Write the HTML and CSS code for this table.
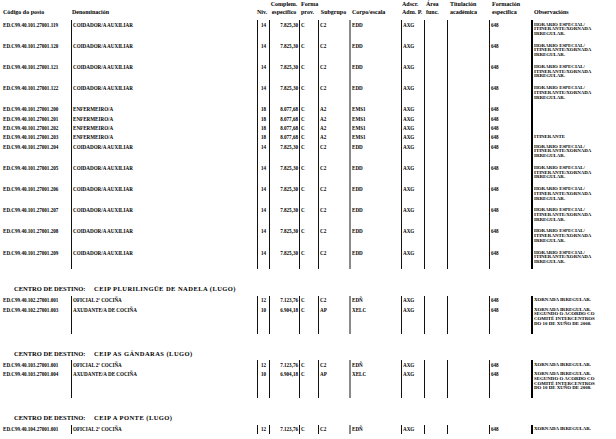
FILE: index.html
```html
<!DOCTYPE html>
<html lang="gl">
<head>
<meta charset="utf-8">
<title>Relación de postos</title>
<link rel="stylesheet" href="styles.css">
</head>
<body>
<div class="page">
  <div class="hrow">
    <div class="h h1"><div class="l1"></div><div class="l2">Código do posto</div></div>
    <div class="h h2"><div class="l1"></div><div class="l2">Denominación</div></div>
    <div class="h h3"><div class="l1"></div><div class="l2">Niv.</div></div>
    <div class="h h4"><div class="l1">Complem.</div><div class="l2">específico</div></div>
    <div class="h h5"><div class="l1">Forma</div><div class="l2">prov.</div></div>
    <div class="h h6"><div class="l1"></div><div class="l2">Subgrupo</div></div>
    <div class="h h7"><div class="l1"></div><div class="l2">Corpo/escala</div></div>
    <div class="h h8"><div class="l1">Adscr.</div><div class="l2">Adm. P.</div></div>
    <div class="h h9"><div class="l1">Área</div><div class="l2">func.</div></div>
    <div class="h h10"><div class="l1">Titulación</div><div class="l2">académica</div></div>
    <div class="h h11"><div class="l1">Formación</div><div class="l2">específica</div></div>
    <div class="h h12"><div class="l1"></div><div class="l2">Observacións</div></div>
  </div>

  <div class="tbl">
    <div class="row t"><div class="c c1">ED.C99.40.101.27001.119</div><div class="c c2">COIDADOR/A AUXILIAR</div><div class="c c3">14</div><div class="c c4">7.825,30</div><div class="c c5">C</div><div class="c c6">C2</div><div class="c c7">EDD</div><div class="c c8">AXG</div><div class="c c9"></div><div class="c c10"></div><div class="c c11">648</div><div class="c c12">HORARIO ESPECIAL/<br>ITINERANTE/XORNADA<br>IRREGULAR.</div></div>
    <div class="row t"><div class="c c1">ED.C99.40.101.27001.120</div><div class="c c2">COIDADOR/A AUXILIAR</div><div class="c c3">14</div><div class="c c4">7.825,30</div><div class="c c5">C</div><div class="c c6">C2</div><div class="c c7">EDD</div><div class="c c8">AXG</div><div class="c c9"></div><div class="c c10"></div><div class="c c11">648</div><div class="c c12">HORARIO ESPECIAL/<br>ITINERANTE/XORNADA<br>IRREGULAR.</div></div>
    <div class="row t"><div class="c c1">ED.C99.40.101.27001.121</div><div class="c c2">COIDADOR/A AUXILIAR</div><div class="c c3">14</div><div class="c c4">7.825,30</div><div class="c c5">C</div><div class="c c6">C2</div><div class="c c7">EDD</div><div class="c c8">AXG</div><div class="c c9"></div><div class="c c10"></div><div class="c c11">648</div><div class="c c12">HORARIO ESPECIAL/<br>ITINERANTE/XORNADA<br>IRREGULAR.</div></div>
    <div class="row t"><div class="c c1">ED.C99.40.101.27001.122</div><div class="c c2">COIDADOR/A AUXILIAR</div><div class="c c3">14</div><div class="c c4">7.825,30</div><div class="c c5">C</div><div class="c c6">C2</div><div class="c c7">EDD</div><div class="c c8">AXG</div><div class="c c9"></div><div class="c c10"></div><div class="c c11">648</div><div class="c c12">HORARIO ESPECIAL/<br>ITINERANTE/XORNADA<br>IRREGULAR.</div></div>
    <div class="row s"><div class="c c1">ED.C99.40.101.27001.200</div><div class="c c2">ENFERMEIRO/A</div><div class="c c3">18</div><div class="c c4">8.077,68</div><div class="c c5">C</div><div class="c c6">A2</div><div class="c c7">EMS1</div><div class="c c8">AXG</div><div class="c c9"></div><div class="c c10"></div><div class="c c11">648</div><div class="c c12"></div></div>
    <div class="row s"><div class="c c1">ED.C99.40.101.27001.201</div><div class="c c2">ENFERMEIRO/A</div><div class="c c3">18</div><div class="c c4">8.077,68</div><div class="c c5">C</div><div class="c c6">A2</div><div class="c c7">EMS1</div><div class="c c8">AXG</div><div class="c c9"></div><div class="c c10"></div><div class="c c11">648</div><div class="c c12"></div></div>
    <div class="row s"><div class="c c1">ED.C99.40.101.27001.202</div><div class="c c2">ENFERMEIRO/A</div><div class="c c3">18</div><div class="c c4">8.077,68</div><div class="c c5">C</div><div class="c c6">A2</div><div class="c c7">EMS1</div><div class="c c8">AXG</div><div class="c c9"></div><div class="c c10"></div><div class="c c11">648</div><div class="c c12"></div></div>
    <div class="row s"><div class="c c1">ED.C99.40.101.27001.203</div><div class="c c2">ENFERMEIRO/A</div><div class="c c3">18</div><div class="c c4">8.077,68</div><div class="c c5">C</div><div class="c c6">A2</div><div class="c c7">EMS1</div><div class="c c8">AXG</div><div class="c c9"></div><div class="c c10"></div><div class="c c11">648</div><div class="c c12">ITINERANTE</div></div>
    <div class="row t"><div class="c c1">ED.C99.40.101.27001.204</div><div class="c c2">COIDADOR/A AUXILIAR</div><div class="c c3">14</div><div class="c c4">7.825,30</div><div class="c c5">C</div><div class="c c6">C2</div><div class="c c7">EDD</div><div class="c c8">AXG</div><div class="c c9"></div><div class="c c10"></div><div class="c c11">648</div><div class="c c12">HORARIO ESPECIAL/<br>ITINERANTE/XORNADA<br>IRREGULAR.</div></div>
    <div class="row t"><div class="c c1">ED.C99.40.101.27001.205</div><div class="c c2">COIDADOR/A AUXILIAR</div><div class="c c3">14</div><div class="c c4">7.825,30</div><div class="c c5">C</div><div class="c c6">C2</div><div class="c c7">EDD</div><div class="c c8">AXG</div><div class="c c9"></div><div class="c c10"></div><div class="c c11">648</div><div class="c c12">HORARIO ESPECIAL/<br>ITINERANTE/XORNADA<br>IRREGULAR.</div></div>
    <div class="row t"><div class="c c1">ED.C99.40.101.27001.206</div><div class="c c2">COIDADOR/A AUXILIAR</div><div class="c c3">14</div><div class="c c4">7.825,30</div><div class="c c5">C</div><div class="c c6">C2</div><div class="c c7">EDD</div><div class="c c8">AXG</div><div class="c c9"></div><div class="c c10"></div><div class="c c11">648</div><div class="c c12">HORARIO ESPECIAL/<br>ITINERANTE/XORNADA<br>IRREGULAR.</div></div>
    <div class="row t"><div class="c c1">ED.C99.40.101.27001.207</div><div class="c c2">COIDADOR/A AUXILIAR</div><div class="c c3">14</div><div class="c c4">7.825,30</div><div class="c c5">C</div><div class="c c6">C2</div><div class="c c7">EDD</div><div class="c c8">AXG</div><div class="c c9"></div><div class="c c10"></div><div class="c c11">648</div><div class="c c12">HORARIO ESPECIAL/<br>ITINERANTE/XORNADA<br>IRREGULAR.</div></div>
    <div class="row t"><div class="c c1">ED.C99.40.101.27001.208</div><div class="c c2">COIDADOR/A AUXILIAR</div><div class="c c3">14</div><div class="c c4">7.825,30</div><div class="c c5">C</div><div class="c c6">C2</div><div class="c c7">EDD</div><div class="c c8">AXG</div><div class="c c9"></div><div class="c c10"></div><div class="c c11">648</div><div class="c c12">HORARIO ESPECIAL/<br>ITINERANTE/XORNADA<br>IRREGULAR.</div></div>
    <div class="row t"><div class="c c1">ED.C99.40.101.27001.209</div><div class="c c2">COIDADOR/A AUXILIAR</div><div class="c c3">14</div><div class="c c4">7.825,30</div><div class="c c5">C</div><div class="c c6">C2</div><div class="c c7">EDD</div><div class="c c8">AXG</div><div class="c c9"></div><div class="c c10"></div><div class="c c11">648</div><div class="c c12">HORARIO ESPECIAL/<br>ITINERANTE/XORNADA<br>IRREGULAR.</div></div>
  </div>

  <div class="sect"><span class="sl">CENTRO DE DESTINO:</span><span class="sn">CEIP PLURILINGÜE DE NADELA (LUGO)</span></div>
  <div class="tbl">
    <div class="row s"><div class="c c1">ED.C99.40.102.27001.001</div><div class="c c2">OFICIAL 2ª COCIÑA</div><div class="c c3">12</div><div class="c c4">7.123,76</div><div class="c c5">C</div><div class="c c6">C2</div><div class="c c7">EDÑ</div><div class="c c8">AXG</div><div class="c c9"></div><div class="c c10"></div><div class="c c11">648</div><div class="c c12">XORNADA IRREGULAR.</div></div>
    <div class="row q"><div class="c c1">ED.C99.40.102.27001.003</div><div class="c c2">AXUDANTE/A DE COCIÑA</div><div class="c c3">10</div><div class="c c4">6.904,18</div><div class="c c5">C</div><div class="c c6">AP</div><div class="c c7">XELC</div><div class="c c8">AXG</div><div class="c c9"></div><div class="c c10"></div><div class="c c11">648</div><div class="c c12">XORNADA IRREGULAR.<br>SEGUNDO O ACORDO CO<br>COMITÉ INTERCENTROS<br>DO 10 DE XUÑO DE 2008.</div></div>
  </div>

  <div class="sect"><span class="sl">CENTRO DE DESTINO:</span><span class="sn">CEIP AS GÁNDARAS (LUGO)</span></div>
  <div class="tbl">
    <div class="row s"><div class="c c1">ED.C99.40.103.27001.001</div><div class="c c2">OFICIAL 2ª COCIÑA</div><div class="c c3">12</div><div class="c c4">7.123,76</div><div class="c c5">C</div><div class="c c6">C2</div><div class="c c7">EDÑ</div><div class="c c8">AXG</div><div class="c c9"></div><div class="c c10"></div><div class="c c11">648</div><div class="c c12">XORNADA IRREGULAR.</div></div>
    <div class="row q"><div class="c c1">ED.C99.40.103.27001.004</div><div class="c c2">AXUDANTE/A DE COCIÑA</div><div class="c c3">10</div><div class="c c4">6.904,18</div><div class="c c5">C</div><div class="c c6">AP</div><div class="c c7">XELC</div><div class="c c8">AXG</div><div class="c c9"></div><div class="c c10"></div><div class="c c11">648</div><div class="c c12">XORNADA IRREGULAR.<br>SEGUNDO O ACORDO CO<br>COMITÉ INTERCENTROS<br>DO 10 DE XUÑO DE 2008.</div></div>
  </div>

  <div class="sect"><span class="sl">CENTRO DE DESTINO:</span><span class="sn">CEIP A PONTE (LUGO)</span></div>
  <div class="tbl">
    <div class="row s"><div class="c c1">ED.C99.40.104.27001.001</div><div class="c c2">OFICIAL 2ª COCIÑA</div><div class="c c3">12</div><div class="c c4">7.123,76</div><div class="c c5">C</div><div class="c c6">C2</div><div class="c c7">EDÑ</div><div class="c c8">AXG</div><div class="c c9"></div><div class="c c10"></div><div class="c c11">648</div><div class="c c12">XORNADA IRREGULAR.</div></div>
  </div>
</div>
</body>
</html>
```

FILE: styles.css
```css
html, body {
  margin: 0;
  padding: 0;
  background: #fff;
}

.page {
  width: 616px;
  font-family: "Liberation Serif", "Times New Roman", serif;
  font-weight: bold;
  color: #000;
}

.hrow,
.row {
  display: grid;
  grid-template-columns: 71px 186px 12px 30px 19px 31px 52px 23px 23px 42px 42px 1fr;
}

.hrow {
  height: 20px;
  font-size: 6px;
  line-height: 8px;
}

.h .l1,
.h .l2 {
  height: 8px;
  white-space: nowrap;
}

.h1 { padding-left: 3px; }
.h2 { padding-left: 1px; }
.h3 { padding-left: 0; }
.h4 { text-align: center; }
.h5 { padding-left: 2px; }
.h6 { text-align: center; }
.h7 { padding-left: 3px; }
.h8 { padding-left: 1px; }
.h9 { padding-left: 2px; }
.h10 { padding-left: 3px; }
.h11 { padding-left: 3px; }
.h12 { padding-left: 3px; }

.row.t { height: 21.2px; }
.row.s { height: 9.33px; }
.row.q { height: 28.7px; }

.c {
  box-sizing: border-box;
  font-size: 5.1px;
  line-height: 5px;
  padding-top: 2.5px;
  white-space: nowrap;
  overflow: visible;
}

.c2, .c3, .c4, .c5, .c6, .c8, .c9, .c10, .c11 {
  border-left: 1px solid #111;
}

.c7 {
  border-left: 2px solid #8a8a8a;
}

.c12 {
  border-left: 2px solid #000;
  font-size: 4.9px;
  line-height: 4.8px;
}

.c1 { padding-left: 3px; }
.c2 { padding-left: 1px; }
.c3 { text-align: center; }
.c4 { text-align: right; padding-right: 1px; }
.c5 { padding-left: 1px; }
.c6 { padding-left: 1px; }
.c7 { padding-left: 1px; }
.c8 { padding-left: 1px; }
.c11 { padding-left: 1px; }
.c12 { padding-left: 1px; }

.sect {
  height: 8px;
  line-height: 8px;
  font-size: 6.5px;
  margin: 16px 0 2.5px;
  white-space: nowrap;
}

.sect .sl {
  display: inline-block;
  width: 80px;
  padding-left: 14px;
}

.sect .sn {
  letter-spacing: 0.45px;
}
```
